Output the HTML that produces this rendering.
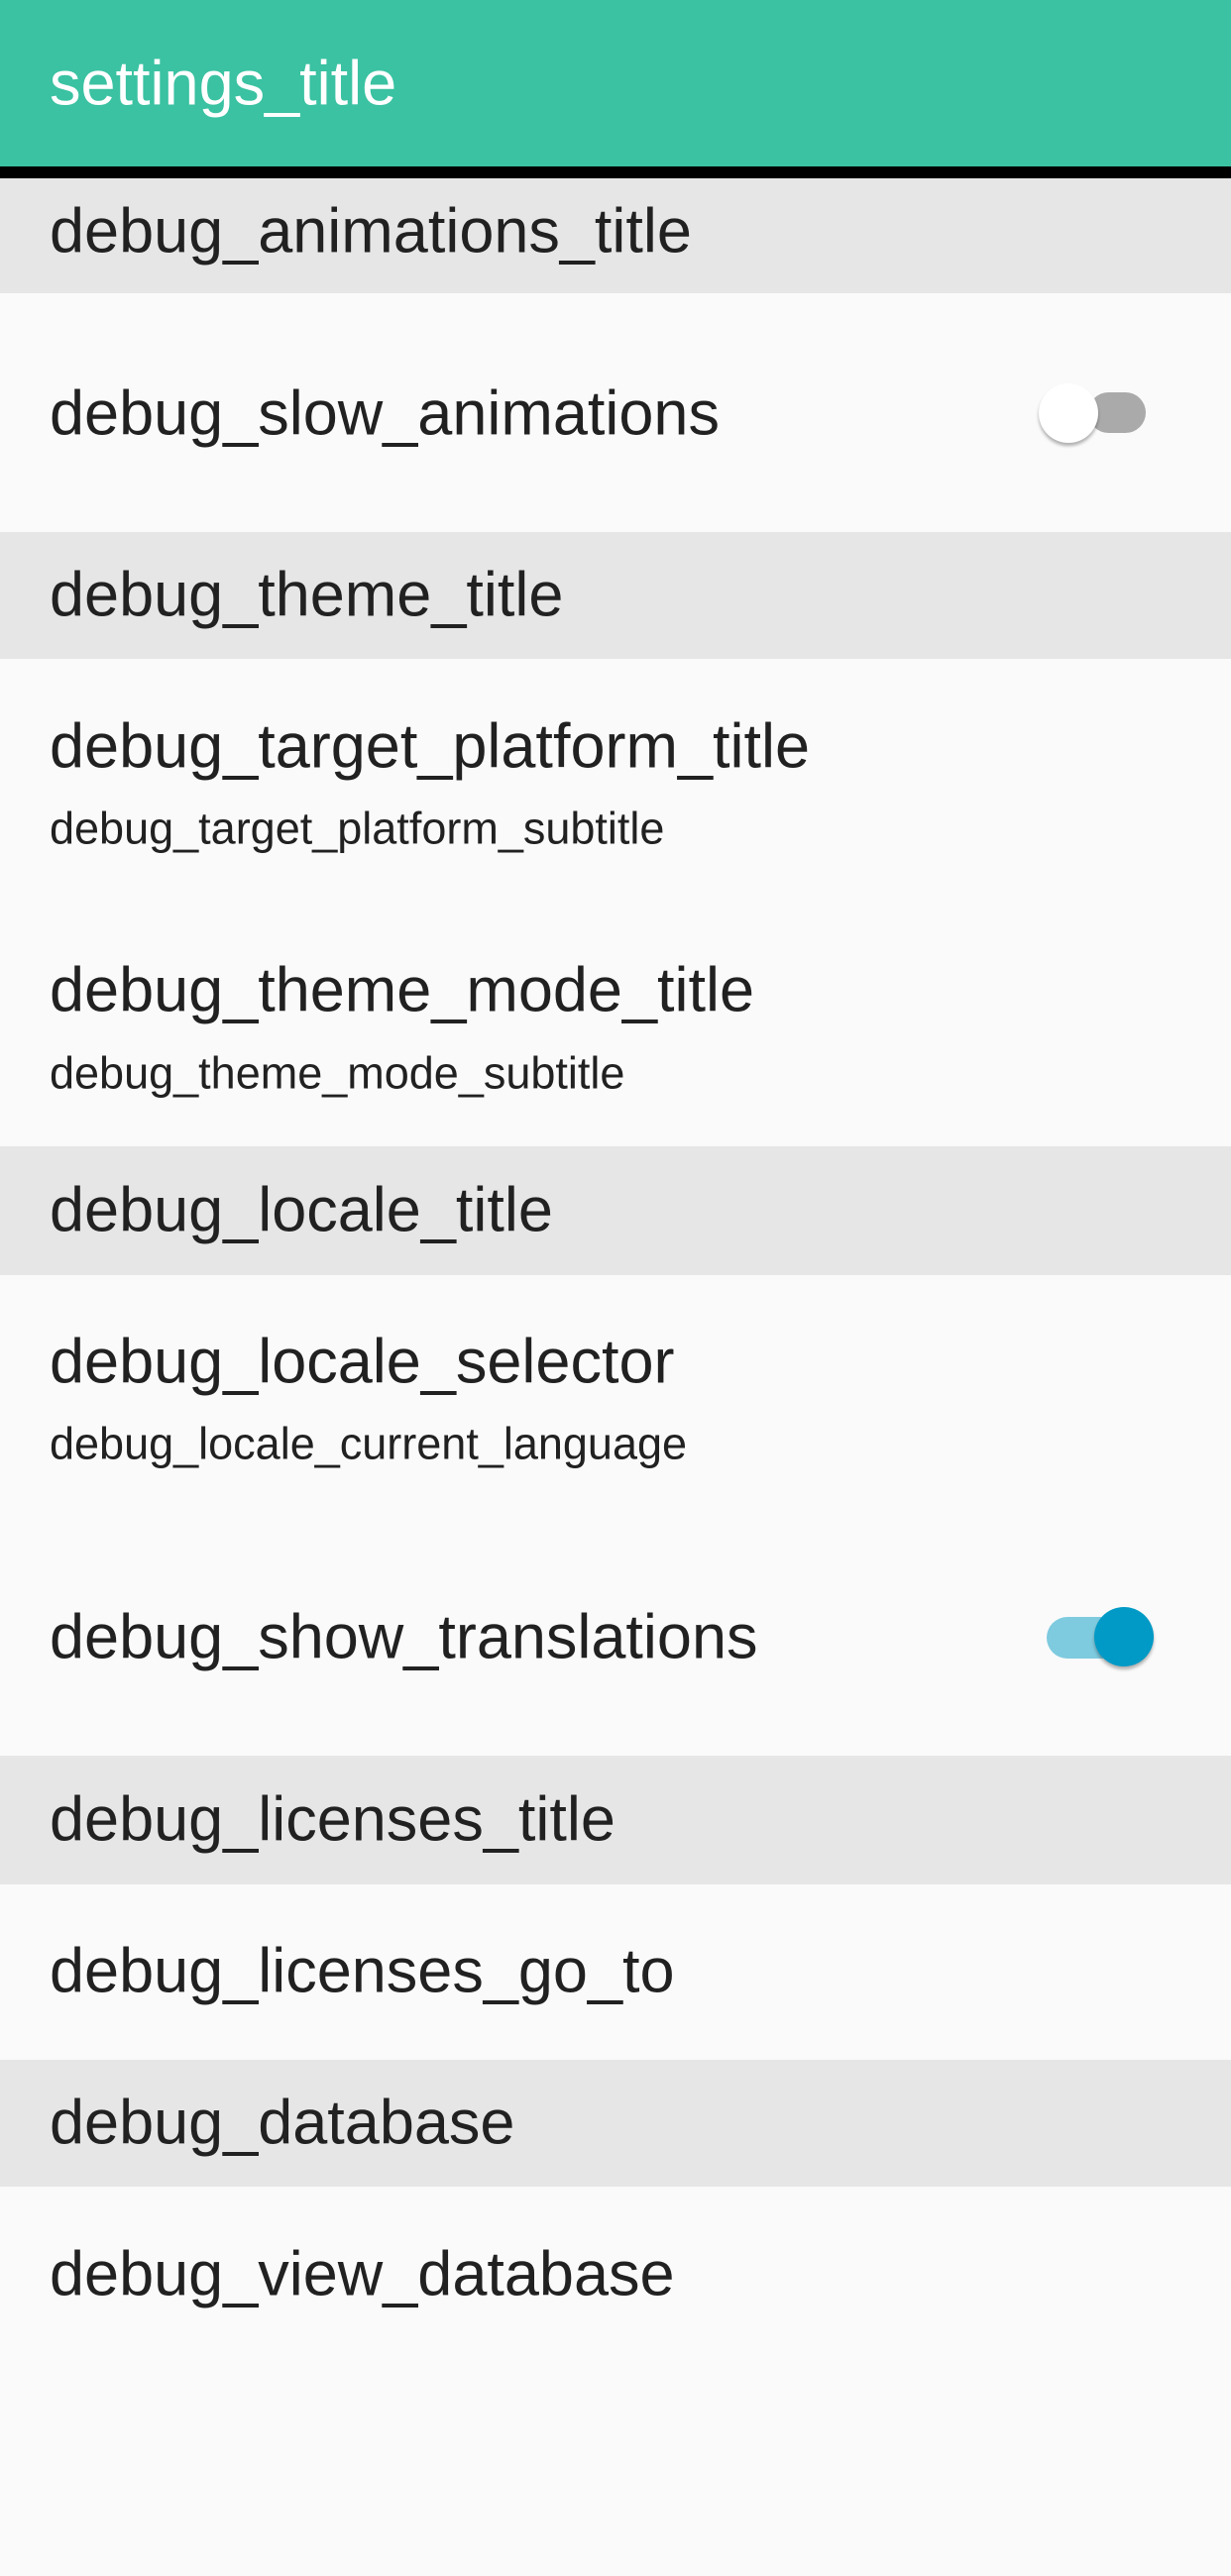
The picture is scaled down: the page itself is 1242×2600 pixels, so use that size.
<!DOCTYPE html>
<html><head><meta charset="utf-8"><style>
*{margin:0;padding:0;box-sizing:border-box}
body{width:1242px;height:2600px;background:#fafafa;font-family:"Liberation Sans",sans-serif;color:#212121;position:relative;overflow:hidden}
.abs{position:absolute;left:0;width:1242px}
.t{position:absolute;left:50px;font-size:63px;line-height:1;white-space:nowrap;transform:translateY(-50%)}
.s{position:absolute;left:50px;font-size:45px;line-height:1;white-space:nowrap;transform:translateY(-50%)}
.sec{background:#e6e6e6}
</style></head><body>
<div class="abs" style="top:0;height:168px;background:#3ac2a2"></div>
<div class="abs" style="top:168px;height:12px;background:#000"></div>
<div class="t" style="top:85px;color:#fff">settings_title</div>

<div class="abs sec" style="top:180px;height:116px"></div>
<div class="t" style="top:234px">debug_animations_title</div>
<div class="t" style="top:418px">debug_slow_animations</div>
<div style="position:absolute;left:1098px;top:396px;width:58px;height:41px;border-radius:21px;background:#aaa"></div>
<div style="position:absolute;left:1048px;top:387px;width:60px;height:60px;border-radius:50%;background:#fff;box-shadow:0 3px 3px rgba(0,0,0,.3)"></div>

<div class="abs sec" style="top:537px;height:128px"></div>
<div class="t" style="top:601px">debug_theme_title</div>
<div class="t" style="top:754px">debug_target_platform_title</div>
<div class="s" style="top:836px">debug_target_platform_subtitle</div>
<div class="t" style="top:1000px">debug_theme_mode_title</div>
<div class="s" style="top:1083px">debug_theme_mode_subtitle</div>

<div class="abs sec" style="top:1157px;height:130px"></div>
<div class="t" style="top:1222px">debug_locale_title</div>
<div class="t" style="top:1375px">debug_locale_selector</div>
<div class="s" style="top:1457px">debug_locale_current_language</div>
<div class="t" style="top:1653px">debug_show_translations</div>
<div style="position:absolute;left:1056px;top:1632px;width:76px;height:42px;border-radius:21px;background:#7ecadf"></div>
<div style="position:absolute;left:1104px;top:1622px;width:60px;height:60px;border-radius:50%;background:#019ac6;box-shadow:0 3px 3px rgba(0,0,0,.3)"></div>

<div class="abs sec" style="top:1772px;height:130px"></div>
<div class="t" style="top:1837px">debug_licenses_title</div>
<div class="t" style="top:1990px">debug_licenses_go_to</div>

<div class="abs sec" style="top:2079px;height:128px"></div>
<div class="t" style="top:2143px">debug_database</div>
<div class="t" style="top:2296px">debug_view_database</div>
</body></html>
